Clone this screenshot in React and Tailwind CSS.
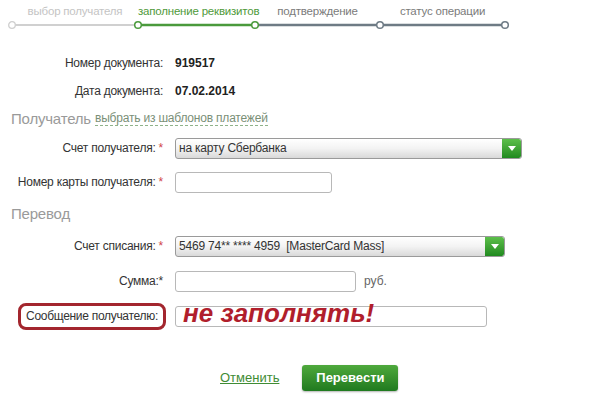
import React from "react";

const steps = [
  { label: "выбор получателя", w: "w-[126px]", text: "text-[#c4c4c4]" },
  { label: "заполнение реквизитов", w: "w-[117px]", text: "text-[#4f9a3a]" },
  { label: "подтверждение", w: "w-[125px]", text: "text-[#7b7b7b]" },
  { label: "статус операции", w: "w-[125px]", text: "text-[#7b7b7b]" },
];

function Steps() {
  return (
    <div className="pt-[3px]">
      <div className="flex pl-[12px] text-[11.5px] leading-[16px] tracking-[-0.2px]">
        {steps.map((s) => (
          <div key={s.label} className={`${s.w} whitespace-nowrap text-center ${s.text}`}>
            {s.label}
          </div>
        ))}
      </div>
      <svg width="604" height="10" className="mt-[1px] block">
        <line x1="12" y1="5" x2="138" y2="5" stroke="#d0d0d0" strokeWidth="2" />
        <line x1="138" y1="5" x2="255" y2="5" stroke="#4a9a3c" strokeWidth="2.5" />
        <line x1="255" y1="5" x2="505" y2="5" stroke="#6e7b85" strokeWidth="2.5" />
        <circle cx="12" cy="5" r="3.3" fill="#fff" stroke="#cfcfcf" strokeWidth="1.3" />
        <circle cx="138" cy="5" r="3.3" fill="#fff" stroke="#4a9a3c" strokeWidth="1.5" />
        <circle cx="255" cy="5" r="3.3" fill="#fff" stroke="#4a9a3c" strokeWidth="1.5" />
        <circle cx="380" cy="5" r="3.3" fill="#fff" stroke="#6e7b85" strokeWidth="1.5" />
        <circle cx="505" cy="5" r="3.3" fill="#fff" stroke="#6e7b85" strokeWidth="1.5" />
      </svg>
    </div>
  );
}

function Row({ label, star, children, h = "h-[34px]" }) {
  return (
    <div className={`flex items-center ${h}`}>
      <div className="w-[163px] shrink-0 text-right text-[12px] tracking-[-0.25px] text-[#333]">
        {label}
        {star && <span className="text-[#d0464a]"> *</span>}
      </div>
      <div className="ml-[12px] flex items-center">{children}</div>
    </div>
  );
}

function Select({ value, w }) {
  return (
    <div
      className={`${w} flex h-[21px] items-stretch overflow-hidden rounded-[3px] border border-[#9a9a9a] bg-gradient-to-b from-white via-[#f3f3f3] to-[#d9d9d9] shadow-[inset_0_1px_0_#fff]`}
    >
      <div className="flex-1 truncate whitespace-pre pl-[3px] text-[12px] leading-[19px] tracking-[-0.2px] text-[#333]">
        {value}
      </div>
      <div className="flex w-[19px] items-center justify-center rounded-r-[2px] bg-gradient-to-b from-[#5cbf4a] to-[#1f8a1f]">
        <svg width="8" height="5" viewBox="0 0 8 5">
          <path d="M0 0h8L4 5z" fill="#fff" />
        </svg>
      </div>
    </div>
  );
}

function Input({ w }) {
  return <div className={`${w} h-[21px] rounded-[3px] border border-[#b8b8b8] bg-white`} />;
}

export default function App() {
  return (
    <div className="h-[397px] w-[604px] overflow-hidden bg-white font-['Liberation_Sans',Arial,sans-serif]">
      <Steps />

      <div className="mt-[19px]">
        <Row label="Номер документа:" h="h-[28px]">
          <span className="text-[12px] font-bold text-[#222]">919517</span>
        </Row>
        <Row label="Дата документа:" h="h-[28px]">
          <span className="text-[12px] font-bold text-[#222]">07.02.2014</span>
        </Row>
      </div>

      <div className="ml-[11px] mt-[3px] flex h-[22px] items-center gap-[4px]">
        <span className="text-[15px] tracking-[-0.2px] text-[#9a9a9a]">Получатель</span>
        <span className="border-b border-dashed border-[#8fb38a] text-[12px] leading-[13px] tracking-[-0.2px] text-[#7a8f77]">
          выбрать из шаблонов платежей
        </span>
      </div>

      <div className="mt-[1px]">
        <Row label="Счет получателя:" star>
          <Select value="на карту Сбербанка" w="w-[347px]" />
        </Row>
        <Row label="Номер карты получателя:" star>
          <Input w="w-[157px]" />
        </Row>
      </div>

      <div className="ml-[11px] mt-[4px] flex h-[22px] items-center">
        <span className="text-[15px] tracking-[-0.2px] text-[#9a9a9a]">Перевод</span>
      </div>

      <div className="mt-[4px]">
        <Row label="Счет списания:" star>
          <Select value="5469 74** **** 4959  [MasterCard Mass]" w="w-[330px]" />
        </Row>
        <Row label="Сумма:*" h="h-[36px]">
          <Input w="w-[181px]" />
          <span className="ml-[8px] text-[12px] text-[#666]">руб.</span>
        </Row>
      </div>

      <div className="flex h-[34px] items-center">
        <div className="ml-[18px] flex h-[27px] w-[148px] items-center justify-center rounded-[8px] border-[3px] border-[#a3262e] text-[12px] tracking-[-0.3px] text-[#333]">
          Сообщение получателю:
        </div>
        <div className="relative ml-[9px] h-[21px] w-[312px] rounded-[3px] border border-[#b8b8b8] bg-white">
          <span className="absolute left-[7px] top-[-9px] whitespace-nowrap text-[26px] font-bold italic leading-[30px] text-[#b01e2c]">
            не заполнять!
          </span>
        </div>
      </div>

      <div className="mt-[32px] flex items-center">
        <a className="ml-[220px] text-[13px] text-[#3f8c34] underline">Отменить</a>
        <button className="ml-[23px] h-[26px] w-[96px] rounded-[3px] bg-gradient-to-b from-[#4ea93c] to-[#1f7a1f] text-[13px] font-bold text-white shadow-[0_1px_2px_rgba(0,0,0,0.3)]">
          Перевести
        </button>
      </div>
    </div>
  );
}
